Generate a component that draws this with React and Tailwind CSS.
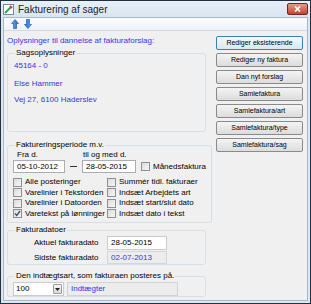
import React from 'react';

const blue = 'text-[#3535e8]';

const Check = ({ checked, label, className = '' }) => (
  <div className={`flex items-center h-[10px] ${className}`}>
    <span className="w-[9px] h-[9px] border border-[#8e8f8f] bg-gradient-to-br from-[#dcdcdc] to-[#f6f6f6] flex items-center justify-center">
      {checked && (
        <svg width="7" height="7" viewBox="0 0 7 7">
          <path d="M1 3.5 L2.8 5.5 L6 1" stroke="#3b4a6b" strokeWidth="1.3" fill="none" />
        </svg>
      )}
    </span>
    <span className="ml-[3px]">{label}</span>
  </div>
);

const Button = ({ children, focused }) => (
  <div
    className={`h-[14px] flex items-center justify-center rounded-[2px] border text-[7px] ${
      focused
        ? 'border-[#3c7fb1] bg-gradient-to-b from-[#f3f9fd] to-[#d9e8f4]'
        : 'border-[#8a8a8a] bg-gradient-to-b from-[#f4f4f4] to-[#dcdcdc]'
    }`}
  >
    {children}
  </div>
);

const Group = ({ title, className = '', children }) => (
  <fieldset className={`border border-[#d5dfe5] rounded-[3px] px-[5px] ${className}`}>
    <legend className="px-[1px] ml-[2px] leading-[10px]">{title}</legend>
    {children}
  </fieldset>
);

const Arrow = ({ down }) => (
  <svg width="8" height="10" viewBox="0 0 8 10" className={down ? 'rotate-180' : ''}>
    <defs>
      <linearGradient id={down ? 'ad' : 'au'} x1="0" x2="1">
        <stop offset="0" stopColor="#6fb2f2" />
        <stop offset="1" stopColor="#1c5fc4" />
      </linearGradient>
    </defs>
    <path d="M4 0.5 L7.5 4.5 L5.5 4.5 L5.5 9.5 L2.5 9.5 L2.5 4.5 L0.5 4.5 Z" fill={`url(#${down ? 'ad' : 'au'})`} stroke="#1b4f9e" strokeWidth="0.6" />
  </svg>
);

export default function App() {
  return (
    <div className="w-[311px] h-[304px] border border-[#22313e] bg-[#dce7f3] flex flex-col font-['Liberation_Sans',sans-serif] text-[8px] text-black">
      {/* title bar */}
      <div className="h-[16px] flex items-center bg-gradient-to-b from-[#e8f0f9] to-[#d8e5f2]">
        <svg width="11" height="11" viewBox="0 0 11 11" className="ml-[2px]">
          <rect x="0.5" y="0.5" width="10" height="10" fill="#fff" stroke="#7a8a99" />
          <path d="M2 9 L8 3" stroke="#2da84a" strokeWidth="2" />
          <path d="M7 2 L9 4" stroke="#d93a2b" strokeWidth="2" />
        </svg>
        <span className="ml-[4px] text-[10px] text-[#1e1e1e]">Fakturering af sager</span>
        <div className="ml-auto mr-[2px] w-[21px] h-[12px] rounded-[2px] border border-[#6b2a22] bg-gradient-to-b from-[#e49a8c] to-[#c2412e] flex items-center justify-center">
          <svg width="7" height="6" viewBox="0 0 7 6">
            <path d="M1 0.5 L6 5.5 M6 0.5 L1 5.5" stroke="#fff" strokeWidth="1.6" />
          </svg>
        </div>
      </div>
      {/* body */}
      <div className="flex-1 mx-[2px] mb-[2px] bg-[#f0f0f0] border border-[#a9b8c6] flex flex-col">
        <div className="h-[13px] flex items-center gap-[5px] pl-[7px] bg-gradient-to-b from-[#fbfcfe] to-[#eef2f8] border-b border-[#d3dae3]">
          <Arrow />
          <Arrow down />
        </div>
        <div className="flex-1 flex pl-[3px]">
          {/* left column */}
          <div className="w-[199px] flex flex-col">
            <div className={`mt-[5px] leading-[10px] ${blue}`}>Oplysninger til dannelse af fakturaforslag:</div>
            <Group title="Sagsoplysninger" className="mt-[2px] h-[84px]">
              <div className={`flex flex-col leading-[10px] pl-[1px] ${blue}`}>
                <div className="mt-[3px]">45164 - 0</div>
                <div className="mt-[8px]">Else Hammer</div>
                <div className="mt-[6px]">Vej 27, 6100 Haderslev</div>
              </div>
            </Group>
            <Group title="Faktureringsperiode m.v." className="mt-[8px] h-[83px]">
              <div className="flex leading-[9px]">
                <span className="ml-[4px] w-[66px]">Fra d.</span>
                <span>til og med d.</span>
              </div>
              <div className="flex items-center mt-[1px]">
                <div className="w-[52px] h-[13px] bg-white border border-[#abadb3] flex items-center pl-[3px]">05-10-2012</div>
                <span className="w-[17px] flex justify-center">
                  <span className="w-[7px] h-[1px] bg-[#333]" />
                </span>
                <div className="w-[54px] h-[13px] bg-white border border-[#abadb3] flex items-center pl-[3px]">28-05-2015</div>
                <Check label="Månedsfaktura" className="ml-[5px]" />
              </div>
              <div className="flex mt-[4px]">
                <div className="w-[94px] flex flex-col gap-[0.5px]">
                  <Check label="Alle posteringer" />
                  <Check label="Varelinier i Tekstorden" />
                  <Check label="Varelinier i Datoorden" />
                  <Check checked label="Varetekst på lønninger" />
                </div>
                <div className="flex flex-col gap-[0.5px]">
                  <Check label="Summér tidl. fakturaer" />
                  <Check label="Indsæt Arbejdets art" />
                  <Check label="Indsæt start/slut dato" />
                  <Check label="Indsæt dato i tekst" />
                </div>
              </div>
            </Group>
            <Group title="Fakturadatoer" className="mt-[2px] h-[40px]">
              <div className="flex items-center mt-[1px]">
                <span className="ml-[21px] w-[73px]">Aktuel fakturadato</span>
                <div className="w-[60px] h-[14px] bg-white border border-[#c9cbd0] flex items-center pl-[3px]">28-05-2015</div>
              </div>
              <div className="flex items-center mt-[1px]">
                <span className="ml-[21px] w-[73px]">Sidste fakturadato</span>
                <div className={`w-[60px] h-[13px] bg-[#ececec] border border-[#d6d6d6] flex items-center pl-[3px] ${blue}`}>02-07-2013</div>
              </div>
            </Group>
            <Group title="Den indtægtsart, som fakturaen posteres på." className="mt-[6px] h-[26px]">
              <div className="flex items-center mt-[1px]">
                <div className="w-[51px] h-[14px] bg-white border border-[#c9cbd0] flex items-center pl-[2px]">
                  <span className="flex-1">100</span>
                  <span className="w-[9px] h-[10px] mr-[1px] border border-[#9a9a9a] rounded-[1px] bg-gradient-to-b from-[#f6f6f6] to-[#d9d9d9] flex items-center justify-center">
                    <svg width="5" height="3" viewBox="0 0 5 3"><path d="M0 0 H5 L2.5 3 Z" fill="#222" /></svg>
                  </span>
                </div>
                <div className={`ml-[3px] w-[111px] h-[14px] bg-[#ececec] border border-[#d3d3d3] flex items-center pl-[3px] ${blue}`}>Indtægter</div>
              </div>
            </Group>
          </div>
          {/* right column */}
          <div className="ml-[10px] w-[87px] mt-[5px] flex flex-col gap-[3px]">
            <Button focused>Rediger eksisterende</Button>
            <Button>Rediger ny faktura</Button>
            <Button>Dan nyt forslag</Button>
            <Button>Samlefaktura</Button>
            <Button>Samlefaktura/art</Button>
            <Button>Samlefaktura/type</Button>
            <Button>Samlefaktura/sag</Button>
          </div>
        </div>
      </div>
    </div>
  );
}
